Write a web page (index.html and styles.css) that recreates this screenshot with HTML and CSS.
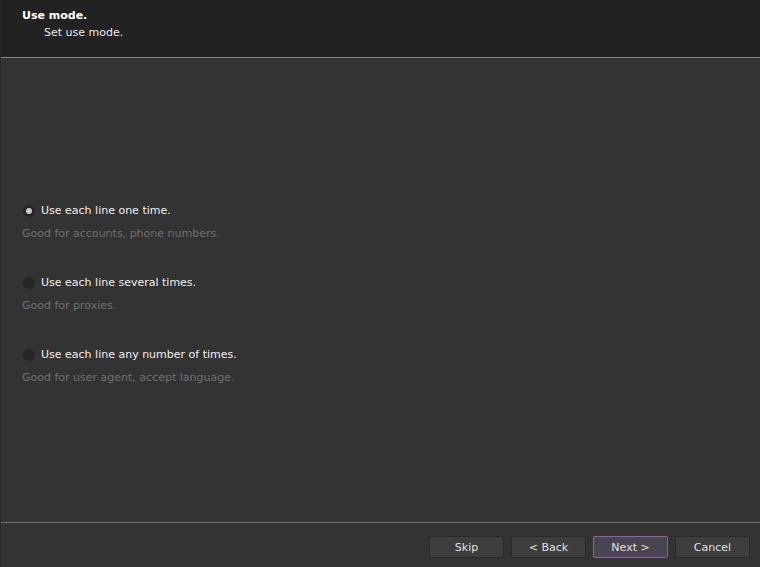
FILE: index.html
```html
<!DOCTYPE html>
<html>
<head>
<meta charset="utf-8">
<link rel="stylesheet" href="styles.css">
</head>
<body>
<div class="wizard">
  <header class="head">
    <div class="title">Use mode.</div>
    <div class="subtitle">Set use mode.</div>
  </header>
  <main class="content">
    <div class="option">
      <label class="radio-row"><span class="radio checked"></span><span class="label">Use each line one time.</span></label>
      <div class="desc">Good for accounts, phone numbers.</div>
    </div>
    <div class="option">
      <label class="radio-row"><span class="radio"></span><span class="label">Use each line several times.</span></label>
      <div class="desc">Good for proxies.</div>
    </div>
    <div class="option">
      <label class="radio-row"><span class="radio"></span><span class="label">Use each line any number of times.</span></label>
      <div class="desc">Good for user agent, accept language.</div>
    </div>
  </main>
  <footer class="foot">
    <button class="btn">Skip</button>
    <button class="btn">&lt; Back</button>
    <button class="btn primary">Next &gt;</button>
    <button class="btn">Cancel</button>
  </footer>
</div>
</body>
</html>
```

FILE: styles.css
```css
html, body {
  margin: 0;
  padding: 0;
  background: #333333;
}
body {
  font-family: "DejaVu Sans", "Noto Sans", sans-serif;
  font-size: 11px;
  color: #e6e6e6;
}
.wizard {
  width: 760px;
  height: 567px;
  display: flex;
  flex-direction: column;
  border-left: 1px solid #26282c;
  box-sizing: border-box;
}
.head {
  height: 58px;
  background: #222222;
  border-bottom: 1px solid #8a8a8a;
  box-sizing: border-box;
  padding: 9px 0 0 21px;
}
.title {
  font-weight: bold;
  color: #ffffff;
  line-height: 13px;
}
.subtitle {
  padding-left: 22px;
  padding-top: 2px;
  line-height: 17px;
  color: #e8e8e8;
}
.content {
  flex: 1;
  padding: 146px 0 0 21px;
  display: flex;
  flex-direction: column;
  gap: 35px;
}
.option {
  display: flex;
  flex-direction: column;
  gap: 9px;
}
.radio-row {
  display: flex;
  align-items: center;
  gap: 6px;
  height: 14px;
  line-height: 14px;
}
.radio {
  width: 12px;
  height: 12px;
  border-radius: 50%;
  background: #262626;
  position: relative;
  margin-left: 1px;
}
.radio.checked::after {
  content: "";
  position: absolute;
  left: 3px;
  top: 3px;
  width: 6px;
  height: 6px;
  border-radius: 50%;
  background: #c8c8c8;
}
.label {
  color: #f0f0f0;
}
.desc {
  color: #707070;
  line-height: 14px;
}
.foot {
  height: 45px;
  border-top: 1px solid #6e6e6e;
  box-sizing: border-box;
  display: flex;
  justify-content: flex-end;
  align-items: flex-start;
  padding: 13px 10px 0 0;
  gap: 7px;
}
.btn {
  width: 75px;
  height: 22px;
  background: #3d3d3d;
  border: 1px solid #2a2a2a;
  border-radius: 2px;
  color: #e0e0e0;
  font-family: "DejaVu Sans", "Noto Sans", sans-serif;
  font-size: 11px;
  padding: 0;
}
.btn.primary {
  background: #4a4450;
  border-color: #8e5fb0;
}
```
